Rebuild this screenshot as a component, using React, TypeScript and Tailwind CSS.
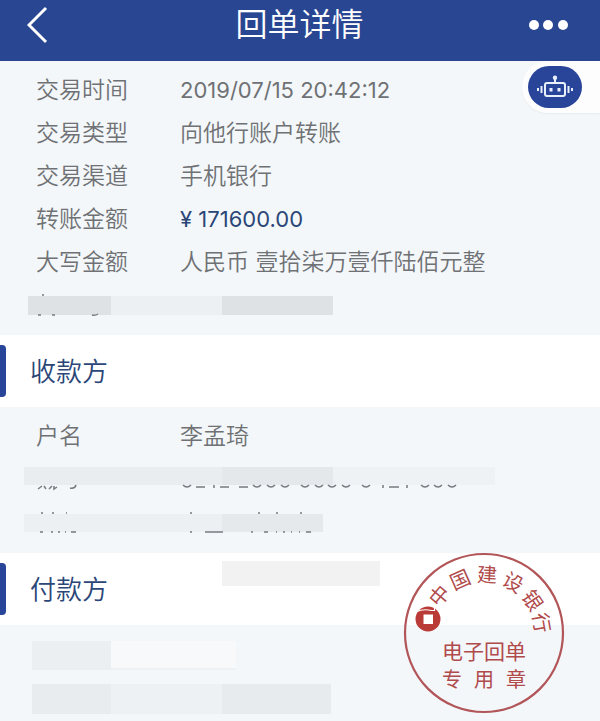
import type { ReactNode } from "react"

const Row = ({ label, children }: { label: string; children: ReactNode }) => (
    <div className="flex h-[43px] items-center">
        <dt className="w-36 shrink-0">{label}</dt>
        <dd className="whitespace-nowrap">{children}</dd>
    </div>
)

const SectionTitle = ({ title, children }: { title: string; children?: ReactNode }) => (
    <div className="relative flex h-[72px] items-center bg-white">
        <span className="h-[52px] w-1.5 rounded-r bg-[#28459a]" />
        <h2 className="ml-6 text-[26px] font-[350] text-[#2b4677]">{title}</h2>
        {children}
    </div>
)

const Traces = ({ d }: { d: string }) => (
    <svg className="absolute left-0 top-0 h-[43px] w-[600px]" viewBox="0 0 600 43" fill="none" stroke="#777b80" strokeWidth="1.5" aria-hidden="true">
        <path d={d} />
    </svg>
)

const sealChars = [
    { char: "中", angle: -50 },
    { char: "国", angle: -24 },
    { char: "建", angle: 3 },
    { char: "设", angle: 30 },
    { char: "银", angle: 56 },
    { char: "行", angle: 80 },
]

const Seal = () => (
    <svg className="absolute right-[35px] -top-px z-10 h-[162px] w-[162px]" viewBox="0 0 162 162" fill="#b04a4b" textAnchor="middle">
        <circle cx="81" cy="81" r="79" fill="none" stroke="#b25558" strokeWidth="2.2" />
        <g fontSize="20">
            {sealChars.map(({ char, angle }) => (
                <text key={char} x="81" y="30" transform={`rotate(${angle} 81 81)`}>{char}</text>
            ))}
        </g>
        <circle cx="25" cy="67" r="12.5" fill="#b93a36" />
        <path d="M20.500 62.500h9.500v9.500h-9.500z" fill="#fff" />
        <path d="M13 60Q20 56.500 28.500 58.500H31.500V53" fill="none" stroke="#fff" strokeWidth="1.200" />
        <text x="81" y="107" fontSize="21">电子回单</text>
        <g fontSize="20">
            <text x="49" y="135">专</text>
            <text x="81" y="135">用</text>
            <text x="113" y="135">章</text>
        </g>
    </svg>
)

export default function App() {
    return (
        <main className="relative min-h-screen w-full overflow-hidden bg-[#f3f7fa] font-['Inter','Noto_Sans_CJK_SC',sans-serif] text-[#6f7174]">
            <header className="flex h-[61px] items-center justify-between bg-[#294692] pb-3 pl-[27px] pr-8 text-white">
                <button type="button" aria-label="返回" className="w-11">
                    <svg className="h-[38px] w-[22px]" viewBox="0 0 22 38" fill="none" stroke="currentColor" strokeWidth="3">
                        <path d="M19 2 2 19l17 17" />
                    </svg>
                </button>
                <h1 className="text-[32px] font-[350]">回单详情</h1>
                <button type="button" aria-label="更多" className="w-10">
                    <svg className="h-3 w-10" viewBox="0 0 40 12" fill="currentColor">
                        <circle cx="6" cy="6" r="5" />
                        <circle cx="20" cy="6" r="5" />
                        <circle cx="35" cy="6" r="5" />
                    </svg>
                </button>
            </header>

            {/* Assistant tab */}
            <div className="absolute right-0 top-[61px] flex h-[52px] w-[78px] items-center rounded-l-full bg-white/80 pl-1.5 shadow-xs">
                <button type="button" aria-label="智能客服" className="flex h-[42px] w-[54px] items-center justify-center rounded-[21px] bg-[#28459a]">
                    <svg className="h-6 w-10" viewBox="0 0 40 24" fill="none" stroke="#e8f0fb" strokeWidth="2">
                        <rect x="10" y="8" width="20" height="13" rx="2" />
                        <path d="M20 8V3M6.500 11v7M33.500 11v7M3 13v3M37 13v3" />
                        <path d="M16 13v3.500M24 13v3.500" strokeWidth="3" />
                        <circle cx="20" cy="2.800" r="2.200" fill="#e8f0fb" stroke="none" />
                    </svg>
                </button>
            </div>

            <dl className="py-2 pl-9 text-[23px] font-[350]">
                <Row label="交易时间"><span className="text-[22px] font-normal">2019/07/15 20:42:12</span></Row>
                <Row label="交易类型">向他行账户转账</Row>
                <Row label="交易渠道">手机银行</Row>
                <Row label="转账金额"><span className="text-[22px] font-normal text-[#2b4677]">¥ 171600.00</span></Row>
                <Row label="大写金额">人民币 壹拾柒万壹仟陆佰元整</Row>
                <div className="relative -ml-9 flex h-[43px] items-center pl-7">
                    <Traces d="M42 11h2M38 31h3M52 31h3M92 31q3 1 6-1" />
                    <span className="h-[19px] w-[83px] bg-[#dee2e5]" />
                    <span className="h-[19px] w-[111px] bg-[#ecf0f2]" />
                    <span className="h-[19px] w-[111px] bg-[#dee2e5]" />
                </div>
            </dl>

            <SectionTitle title="收款方" />
            <dl className="pb-[9px] pt-2 pl-9 text-[23px] font-[350]">
                <Row label="户名">李孟琦</Row>
                <div className="relative -ml-9 flex h-[43px] items-start pl-6 pt-[9px]">
                    <Traces d="M38 31l4-3M44 28l2 3M49 31l3-3M54 28v3l3-2M70 30q5 1 6-3M183 27q4 4 8 0M196 29h9M214 27v3M220 29h9M239 29h9M253 27q4 4 8 0M267 27q4 4 8 0M281 27q4 4 8 0M301 27q4 4 8 0M315 27q4 4 8 0M328 27q4 4 8 0M342 27q4 4 8 0M362 27q4 4 8 0M383 27v3M389 29h10M407 27v3M421 27q4 4 8 0M434 27q4 4 8 0M448 27q4 4 8 0" />
                    <span className="h-[18px] w-[198px] bg-[#e9edf0]" />
                    <span className="h-[18px] w-[111px] bg-[#e4e8eb]" />
                    <span className="h-[18px] w-[162px] bg-[#eef2f4]" />
                </div>
                <div className="relative -ml-9 flex h-[43px] items-center pl-6">
                    <Traces d="M41 12h2M52 12h2M66 12h1M40 31h3M51 31h2M58 31h2M65 31h1M71 31h5M190 12h2M190 31h2M205 31h18M258 12h2M276 12h2M300 12h2M251 31h2M264 31h4M276 31h1M283 31h2M291 31h1M299 31h1M306 31h5" />
                    <span className="h-[18px] w-[198px] bg-[#ecf0f2]" />
                    <span className="h-[18px] w-[101px] bg-[#e5e9ec]" />
                </div>
            </dl>

            <SectionTitle title="付款方">
                <span className="mb-8 ml-[114px] h-[25px] w-[158px] bg-[#f2f2f2]" />
                <Seal />
            </SectionTitle>
            <div className="flex flex-col gap-3.5 px-8 pt-4">
                <div className="flex h-[29px]">
                    <span className="w-[79px] bg-[#ebeff1]" />
                    <span className="w-[125px] border-b-2 border-[#edf1f3] bg-[#f7f9fb]" />
                </div>
                <div className="flex h-[30px]">
                    <span className="w-[79px] bg-[#e8ecef]" />
                    <span className="w-[111px] bg-[#edf1f4]" />
                    <span className="w-[109px] bg-[#e7ebee]" />
                </div>
            </div>
        </main>
    )
}
